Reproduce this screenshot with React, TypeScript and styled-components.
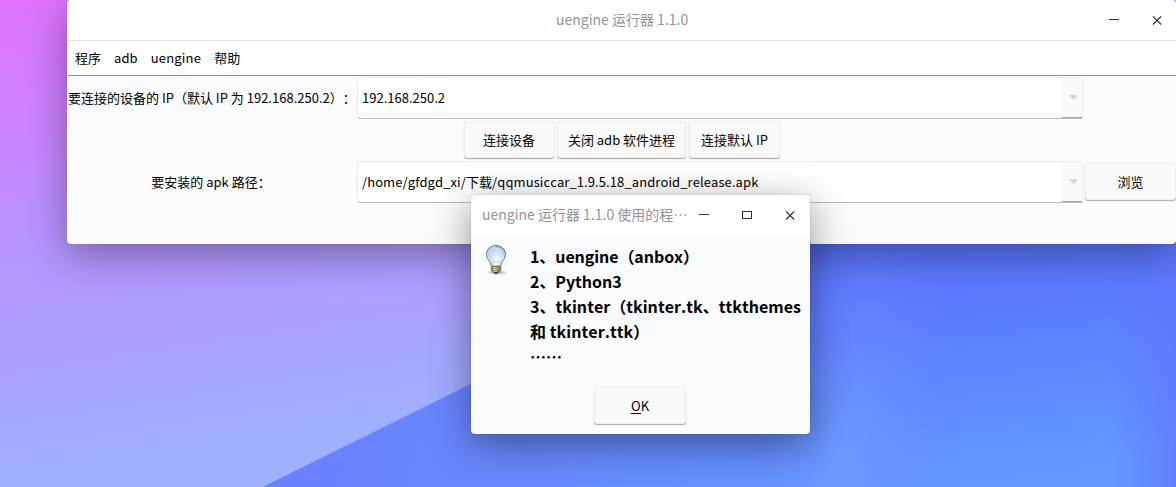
import React from "react";
import styled, { createGlobalStyle } from "styled-components";

const GlobalStyle = createGlobalStyle`
  * { box-sizing: border-box; }
  body {
    margin: 0;
    overflow: hidden;
    font-family: "Noto Sans CJK SC", sans-serif;
    font-size: 13px;
    font-kerning: none;
    color: #000;
  }
`;

const Desktop = styled.main`
  position: relative;
  width: 1176px;
  height: 487px;
  overflow: hidden;
`;

const WallpaperArt = styled.svg`
  position: absolute;
  inset: 0;
`;

const Window = styled.section<{ $x: number; $y: number; $w: number; $h: number }>`
  position: absolute;
  left: ${(p) => p.$x}px;
  top: ${(p) => p.$y}px;
  width: ${(p) => p.$w}px;
  height: ${(p) => p.$h}px;
  display: flex;
  flex-direction: column;
  border-radius: 4px;
  background: #fafbfd;
  overflow: hidden;
`;

const MainWindow = styled(Window)`
  box-shadow: 0 0 1px rgba(0, 0, 0, 0.3), 0 10px 40px rgba(0, 0, 0, 0.36);
`;

const DialogWindow = styled(Window)`
  box-shadow: 0 0 1px rgba(0, 0, 0, 0.5), 0 10px 40px rgba(0, 0, 0, 0.42);
`;

const TitleBar = styled.header<{ $ruled?: boolean }>`
  display: flex;
  align-items: center;
  flex: none;
  height: ${(p) => (p.$ruled ? 41 : 40)}px;
  background: #fff;
  border-bottom: ${(p) => (p.$ruled ? "1px solid #e3e3e3" : "0")};
`;

const Text = styled.span<{ $spacing?: number }>`
  white-space: pre;
  letter-spacing: ${(p) => p.$spacing ?? 0}px;
`;

const Title = styled(Text)<{ $indent: number }>`
  padding-left: ${(p) => p.$indent}px;
  margin-right: auto;
  height: 40px;
  font-size: 14px;
  font-kerning: normal;
  line-height: 38px;
  color: #949494;
`;

const Controls = styled.div<{ $end: number }>`
  display: flex;
  gap: 31px;
  padding-right: ${(p) => p.$end}px;
`;

const ControlIcon = styled.svg`
  display: block;
  width: 12px;
  height: 12px;
  fill: none;
  stroke: #303030;
`;

const MenuBar = styled.nav`
  display: flex;
  align-items: center;
  flex: none;
  gap: 13px;
  height: 35px;
  margin-left: 1px;
  padding-left: 7px;
  background: #fff;
  border-bottom: 1px solid #8e8d92;
`;

const MenuItem = styled(Text)`
  line-height: 34px;
`;

const Form = styled.div`
  display: grid;
  grid-template-columns: 289px 727px 92px;
  grid-template-rows: 42px 42px 42px;
  margin-left: 1px;
  padding-top: 1px;
`;

const Label = styled(Text)<{ $start?: boolean }>`
  justify-self: ${(p) => (p.$start ? "start" : "center")};
  padding-right: ${(p) => (p.$start ? 0 : 3)}px;
  line-height: 41px;
  text-spacing-trim: space-all;
`;

const Combo = styled.div`
  display: flex;
  width: 726px;
  height: 42px;
  background: #fff;
  overflow: hidden;
  border: 1px solid #ececee;
  border-bottom-color: #bcbcbc;
  border-radius: 3px 3px 0 3px;
`;

const ComboValue = styled(Text)`
  flex: 1;
  padding-left: 4px;
  line-height: 39px;
`;

const ComboArrow = styled.div`
  display: flex;
  align-items: center;
  width: 20px;
  padding-left: 7px;
  background: #fafafa;
  border-bottom: 1px solid #a6a6a6;
`;

const Button = styled.button<{ $w: number }>`
  display: flex;
  align-items: center;
  justify-content: center;
  width: ${(p) => p.$w}px;
  height: 37px;
  padding: 0;
  background: #fafafa;
  font: inherit;
  font-kerning: none;
  color: inherit;
  border: 1px solid #eeeeef;
  border-radius: 3px;
  box-shadow: 0 1px 1px rgba(0, 0, 0, 0.32);
`;

const ButtonRow = styled.div`
  grid-column: 2;
  display: flex;
  gap: 3px;
  padding: 2px 0 0 107px;
`;

const BrowseCell = styled.div`
  padding: 2px 0 0 1px;
`;

const Message = styled.div`
  display: flex;
  gap: 18px;
  padding: 5px 0 0 9px;
  height: 152px;
`;

const BulbIcon = styled.svg`
  flex: none;
  margin-top: 4px;
`;

const MessageBody = styled.div`
  display: flex;
  flex-direction: column;
  padding-top: 4px;
  font-size: 16px;
  font-weight: 700;
  line-height: 25px;
`;

const DialogActions = styled.div`
  display: flex;
  justify-content: center;
  padding-right: 1px;
`;

const Mnemonic = styled.span`
  border-bottom: 1px solid #000;
  display: inline-block;
  line-height: 15px;
`;

const Minimize = () => (
  <ControlIcon viewBox="0 0 12 12"><path d="M1 5.5h10" /></ControlIcon>
);
const Maximize = () => (
  <ControlIcon viewBox="0 0 12 12"><rect x="1.5" y="2.5" width="9" height="7" /></ControlIcon>
);
const Close = () => (
  <ControlIcon viewBox="0 0 12 12"><path d="M2 2.300l8.200 8.200M10.200 2.300L2 10.500" strokeWidth="1.200" /></ControlIcon>
);

const Arrow = () => (
  <svg width="8" height="5" viewBox="0 0 8 5"><path d="M0 0h8v1.500L4.800 5L0 .8z" fill="#d3d9dd" /></svg>
);

const Bulb = () => (
  <BulbIcon width="32" height="32" viewBox="0 0 32 32">
    <defs>
      <radialGradient id="glass" cx="55%" cy="62%" r="62%">
        <stop offset="0" stopColor="#f6f9fb" />
        <stop offset=".55" stopColor="#cfdff2" />
        <stop offset="1" stopColor="#7ba5de" />
      </radialGradient>
      <linearGradient id="base" x1="0" x2="1">
        <stop offset="0" stopColor="#77774a" />
        <stop offset=".35" stopColor="#eeeeb0" />
        <stop offset="1" stopColor="#6b6b3c" />
      </linearGradient>
      <radialGradient id="ground">
        <stop offset="0" stopColor="#000" stopOpacity=".4" />
        <stop offset="1" stopColor="#000" stopOpacity="0" />
      </radialGradient>
    </defs>
    <ellipse cx="17" cy="28.500" rx="11" ry="2.600" fill="url(#ground)" />
    <path d="M16 1.500C10.500 1.500 6.500 5.500 6.500 10.500c0 4 2.600 5.400 3.800 8 .6 1.400.5 3.300 1.300 3.800h8.800c.8-.5.700-2.400 1.300-3.800 1.200-2.600 3.800-4 3.800-8 0-5-4-9-9.500-9z" fill="url(#glass)" stroke="#71767f" />
    <path d="M16 2.700c-4.900 0-8.300 3.500-8.300 7.800 0 3.500 2.300 4.800 3.600 7.800" fill="none" stroke="#fff" strokeOpacity=".75" />
    <path d="M10 9.500C10.500 6 13 4.500 16 4.500s5 1 6 4" fill="none" stroke="#fff" strokeOpacity=".5" strokeWidth="1.500" />
    <path d="M13.500 21l-1-3 2 1 1.500-2 1.500 2 2-1-1 3" fill="#fff" stroke="#c4c9bf" strokeWidth=".6" />
    <path d="M11.300 22.500h9.400v4l-2.200 1.700h-5l-2.200-1.700z" fill="url(#base)" stroke="#62623f" strokeWidth=".8" />
    <path d="M11.500 24.700l9-.8M11.500 26.700l9-.8" stroke="#777743" strokeWidth=".7" />
    <path d="M13.500 28.300h5l-1 1.500h-3z" fill="#37372b" />
  </BulbIcon>
);

const Wallpaper = () => (
  <WallpaperArt width="1176" height="487" viewBox="0 0 1176 487">
    <defs>
      <linearGradient id="sky" gradientUnits="userSpaceOnUse" x1="0" y1="0" x2="75" y2="480">
        <stop offset="0" stopColor="#e072ff" />
        <stop offset=".25" stopColor="#cd82ff" />
        <stop offset=".5" stopColor="#b794ff" />
        <stop offset=".75" stopColor="#aaa1ff" />
        <stop offset="1" stopColor="#9fb0ff" />
      </linearGradient>
      <linearGradient id="slope" gradientUnits="userSpaceOnUse" x1="900" y1="240" x2="930" y2="487">
        <stop offset="0" stopColor="#5b72ff" />
        <stop offset=".35" stopColor="#5b7dff" />
        <stop offset="1" stopColor="#639aff" />
      </linearGradient>
      <linearGradient id="left" gradientUnits="userSpaceOnUse" x1="260" y1="0" x2="800" y2="0">
        <stop offset="0" stopColor="#6a80ff" />
        <stop offset=".4" stopColor="#6b86ff" stopOpacity=".9" />
        <stop offset="1" stopColor="#6d90ff" stopOpacity="0" />
      </linearGradient>
      <linearGradient id="right" gradientUnits="userSpaceOnUse" x1="1110" y1="0" x2="1176" y2="0">
        <stop offset="0" stopColor="#6175ff" stopOpacity="0" />
        <stop offset="1" stopColor="#6175ff" stopOpacity=".7" />
      </linearGradient>
      <radialGradient id="glow" gradientUnits="userSpaceOnUse" cx="0" cy="0" r="1" gradientTransform="translate(840 450) rotate(8) scale(120 250)">
        <stop offset="0" stopColor="#779fff" stopOpacity=".6" />
        <stop offset="1" stopColor="#6f80ff" stopOpacity="0" />
      </radialGradient>
    </defs>
    <rect width="1176" height="487" fill="url(#sky)" />
    <path d="M263 487L471 384L810 216L1176 35V487z" fill="url(#slope)" />
    <path d="M263 487L471 384L810 216V487z" fill="url(#left)" />
    <path d="M690 276L810 216H1176V487H690z" fill="url(#glow)" />
    <path d="M1110 70h66v417h-66z" fill="url(#right)" />
  </WallpaperArt>
);

export default function App() {
  return (
    <Desktop>
      <GlobalStyle />
      <Wallpaper />
      <MainWindow $x={67} $y={0} $w={1109} $h={244}>
        <TitleBar $ruled>
          <Title $indent={489}>uengine 运行器 1.1.0</Title>
          <Controls $end={13}><Minimize /><Close /></Controls>
        </TitleBar>
        <MenuBar>
          <MenuItem $spacing={0.05}>程序</MenuItem>
          <MenuItem $spacing={0.05}>adb</MenuItem>
          <MenuItem $spacing={0.2}>uengine</MenuItem>
          <MenuItem>帮助</MenuItem>
        </MenuBar>
        <Form>
          <Label $start>要连接的设备的 IP（默认 IP 为 192.168.250.2）：</Label>
          <Combo>
            <ComboValue>192.168.250.2</ComboValue>
            <ComboArrow><Arrow /></ComboArrow>
          </Combo>
          <span />
          <ButtonRow>
            <Button $w={90}>连接设备</Button>
            <Button $w={129}>关闭 adb 软件进程</Button>
            <Button $w={91}>连接默认 IP</Button>
          </ButtonRow>
          <span />
          <Label>要安装的 apk 路径：</Label>
          <Combo>
            <ComboValue $spacing={0.085}>/home/gfdgd_xi/下载/qqmusiccar_1.9.5.18_android_release.apk</ComboValue>
            <ComboArrow><Arrow /></ComboArrow>
          </Combo>
          <BrowseCell><Button $w={91}>浏览</Button></BrowseCell>
        </Form>
      </MainWindow>
      <DialogWindow $x={471} $y={195} $w={339} $h={239}>
        <TitleBar>
          <Title $indent={11}>uengine 运行器 1.1.0 使用的程⋯</Title>
          <Controls $end={14}><Minimize /><Maximize /><Close /></Controls>
        </TitleBar>
        <Message>
          <Bulb />
          <MessageBody>
            <Text $spacing={-0.08}>1、uengine（anbox）</Text>
            <Text $spacing={-0.05}>2、Python3</Text>
            <Text $spacing={0.03}>3、tkinter（tkinter.tk、ttkthemes</Text>
            <Text $spacing={0.06}>和 tkinter.ttk）</Text>
            <Text>……</Text>
          </MessageBody>
        </Message>
        <DialogActions>
          <Button $w={92}><span><Mnemonic>O</Mnemonic>K</span></Button>
        </DialogActions>
      </DialogWindow>
    </Desktop>
  );
}
